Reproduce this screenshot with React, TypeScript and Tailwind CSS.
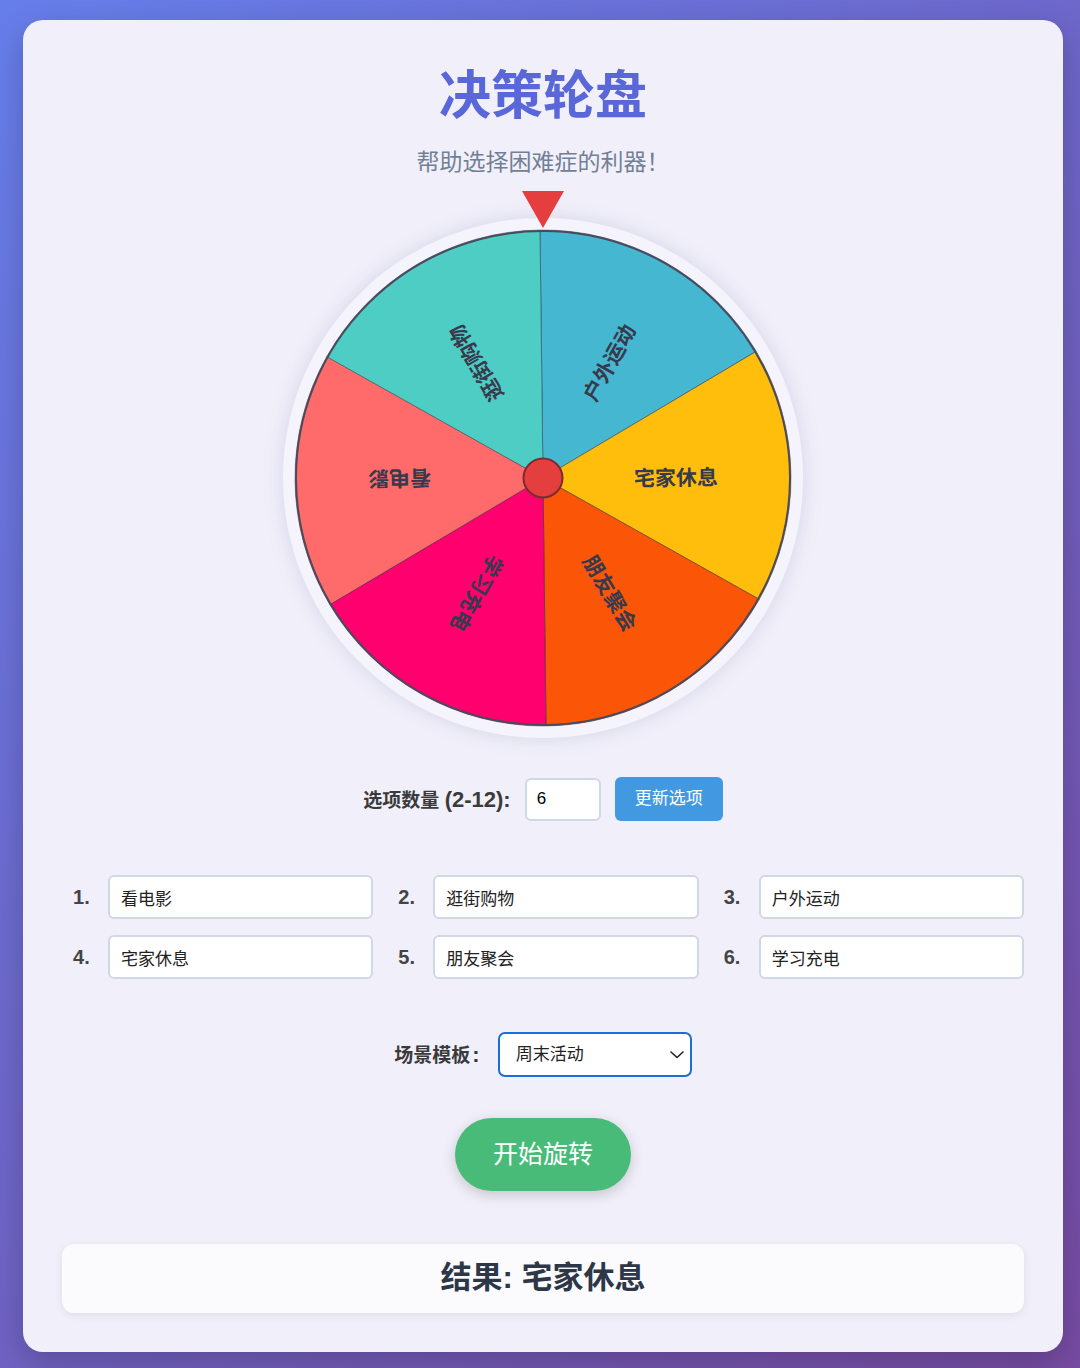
import React from "react";

const segs = [
  { label: "户外运动", color: "#45B7D1" },
  { label: "宅家休息", color: "#FFBE0B" },
  { label: "朋友聚会", color: "#FB5607" },
  { label: "学习充电", color: "#FF006E" },
  { label: "看电影", color: "#FF6B6B" },
  { label: "逛街购物", color: "#4ECDC4" },
];

const options = ["看电影", "逛街购物", "户外运动", "宅家休息", "朋友聚会", "学习充电"];

function Wheel() {
  const cx = 250;
  const cy = 250;
  const r = 248;
  const start0 = -90.7;
  const step = 360 / segs.length;
  const rad = (d: number) => (d * Math.PI) / 180;
  return (
    <svg width="500" height="500" viewBox="0 0 500 500" className="block">
      {segs.map((s, i) => {
        const a1 = start0 + i * step;
        const a2 = a1 + step;
        const x1 = cx + r * Math.cos(rad(a1));
        const y1 = cy + r * Math.sin(rad(a1));
        const x2 = cx + r * Math.cos(rad(a2));
        const y2 = cy + r * Math.sin(rad(a2));
        return (
          <path
            key={i}
            d={`M ${cx} ${cy} L ${x1} ${y1} A ${r} ${r} 0 0 1 ${x2} ${y2} Z`}
            fill={s.color}
            stroke="rgba(40,40,60,0.45)"
            strokeWidth="1"
          />
        );
      })}
      {segs.map((s, i) => {
        const mid = start0 + i * step + step / 2;
        return (
          <text
            key={"t" + i}
            transform={`translate(${cx} ${cy}) rotate(${mid})`}
            x="175"
            y="0"
            textAnchor="end"
            dominantBaseline="central"
            fontSize="21"
            fontWeight="bold"
            fill="#363a4c"
            fontFamily="'Noto Sans CJK SC', sans-serif"
          >
            {s.label}
          </text>
        );
      })}
      <circle cx={cx} cy={cy} r={r - 1} fill="none" stroke="#4a4a5c" strokeWidth="2" />
      <circle cx={cx} cy={cy} r="19.5" fill="#e53e3e" stroke="#7b2b2f" strokeWidth="2" />
    </svg>
  );
}

export default function App() {
  return (
    <div className="min-h-[1368px] w-full bg-[linear-gradient(135deg,#667eea_0%,#764ba2_100%)] pt-[20px] pb-[16px] font-['Liberation_Sans','Noto_Sans_CJK_SC',sans-serif]">
      <div className="ml-[23px] w-[1040px] rounded-[20px] bg-[#f1f0fa] px-[39px] pt-[40px] pb-[39px] shadow-[0_10px_30px_rgba(0,0,0,0.2)]">
        <h1 className="text-center text-[52px] leading-[72px] font-bold text-[#5a67d8]">决策轮盘</h1>
        <p className="mt-[15px] text-center text-[23px] leading-[30px] text-[#718096]">帮助选择困难症的利器！</p>

        <div className="mt-[41px] flex justify-center">
          <div className="relative rounded-full bg-[#f5f4fc] p-[10px] shadow-[0_0_22px_rgba(60,50,120,0.14)]">
            <Wheel />
            <svg
              width="42"
              height="37"
              viewBox="0 0 42 37"
              className="absolute left-1/2 top-[-27px] -translate-x-1/2"
            >
              <polygon points="0,0 42,0 21,37" fill="#e53e3e" />
            </svg>
          </div>
        </div>

        <div className="mt-[39px] flex items-center justify-center gap-[14px]">
          <label className="text-[19px] font-bold text-[#3a3a3a]">
            选项数量 <span className="text-[22px]">(2-12):</span>
          </label>
          <input
            type="number"
            defaultValue={6}
            className="h-[43px] w-[76px] rounded-[6px] border-2 border-[#cfd8e3] bg-white pl-[10px] text-[17px] text-black outline-none"
          />
          <button className="h-[44px] w-[108px] rounded-[6px] bg-[#4299e1] text-[17px] text-white">更新选项</button>
        </div>

        <div className="mt-[54px] grid grid-cols-3 gap-x-[14px] gap-y-[16px]">
          {options.map((o, i) => (
            <div key={i} className="flex items-center">
              <span className="w-[46px] shrink-0 pl-[11px] text-[20px] font-bold text-[#444]">{i + 1}.</span>
              <input
                type="text"
                defaultValue={o}
                className="h-[44px] min-w-0 flex-1 rounded-[6px] border-2 border-[#cfd8e3] bg-white pl-[11px] text-[17px] text-[#222] outline-none"
              />
            </div>
          ))}
        </div>

        <div className="mt-[53px] flex items-center justify-center gap-[14px]">
          <label className="text-[19px] font-bold text-[#3a3a3a]">
            场景模板<span className="pl-[2px] pr-[4px] text-[22px]">:</span>
          </label>
          <div className="relative">
            <select
              defaultValue="weekend"
              className="h-[45px] w-[194px] appearance-none rounded-[7px] border-2 border-[#1a6fd6] bg-white pl-[16px] text-[17px] text-[#222] outline-none"
            >
              <option value="weekend">周末活动</option>
            </select>
            <svg
              width="14"
              height="9"
              viewBox="0 0 14 9"
              className="pointer-events-none absolute right-[8px] top-1/2 -translate-y-1/2"
            >
              <path d="M1 1.5 L7 7 L13 1.5" fill="none" stroke="#222" strokeWidth="1.6" strokeLinecap="round" strokeLinejoin="round" />
            </svg>
          </div>
        </div>

        <div className="mt-[41px] flex justify-center">
          <button className="h-[73px] w-[176px] rounded-full bg-[#48bb78] text-[25px] text-white shadow-[0_4px_14px_rgba(0,0,0,0.18)]">
            开始旋转
          </button>
        </div>

        <div className="mt-[53px] flex h-[69px] items-center justify-center rounded-[12px] bg-[#fbfbfd] text-[31px] font-bold text-[#2d3748] shadow-[0_2px_8px_rgba(0,0,0,0.08)]">
          结果: 宅家休息
        </div>
      </div>
    </div>
  );
}
